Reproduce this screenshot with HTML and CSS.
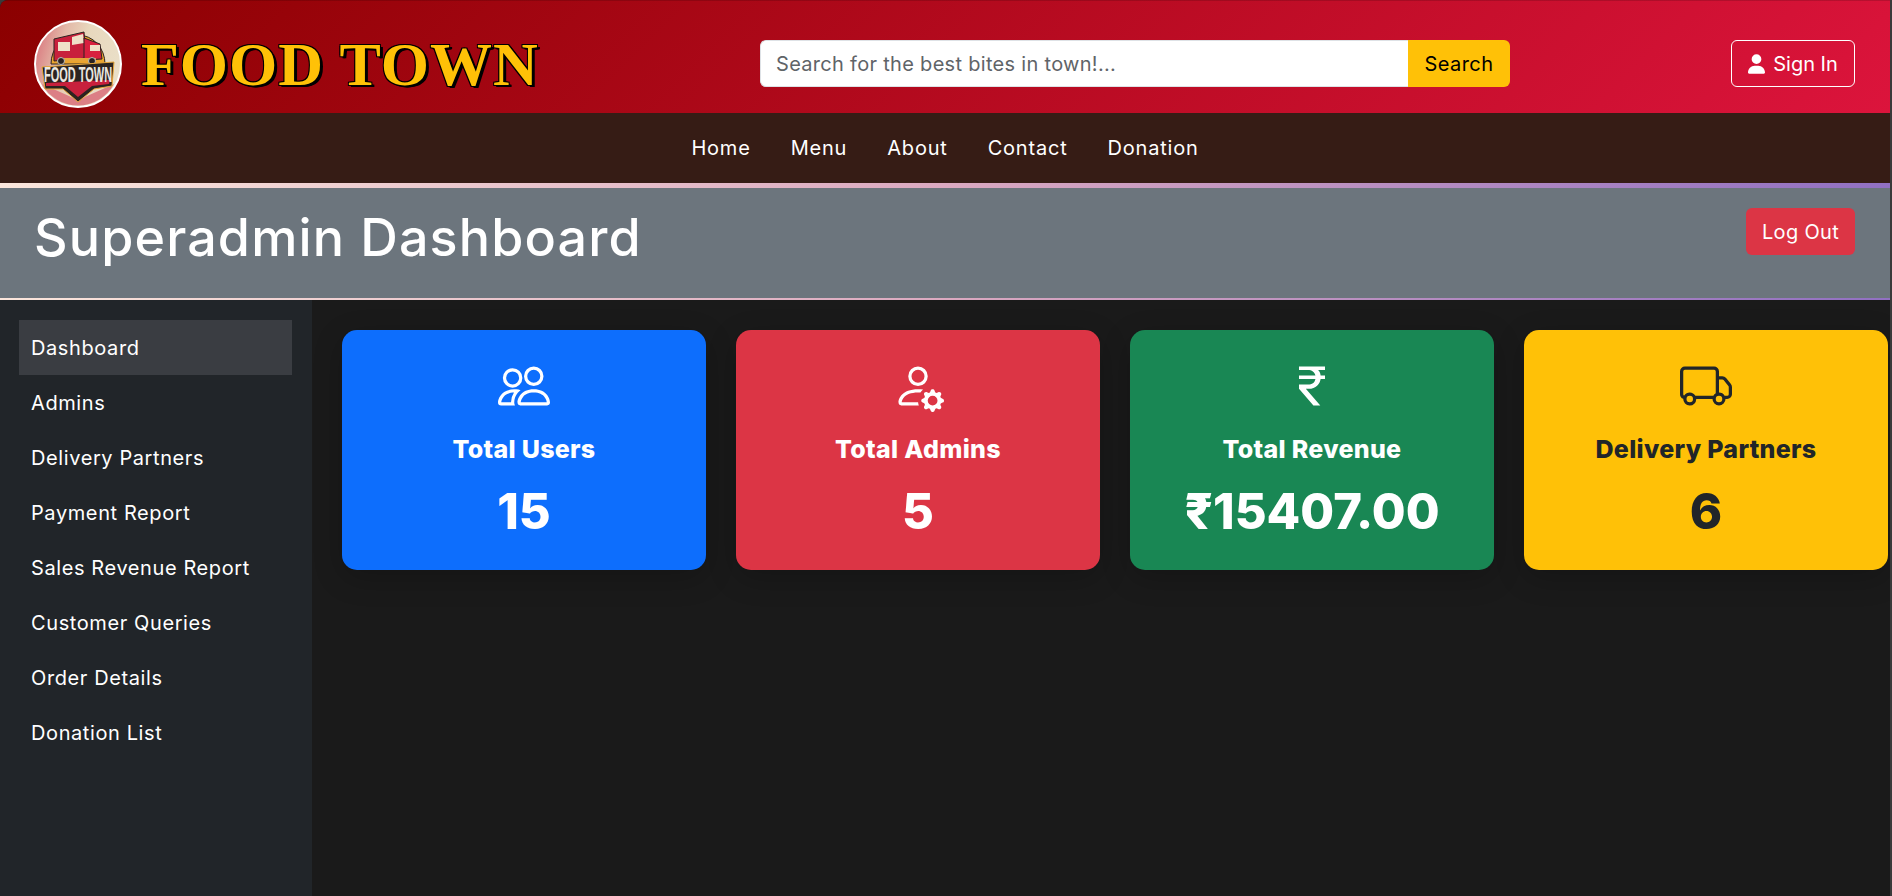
FILE: index.html
```html
<!DOCTYPE html>
<html lang="en">
<head>
<meta charset="utf-8">
<title>Food Town - Superadmin Dashboard</title>
<link rel="stylesheet" href="styles.css">
</head>
<body>
<div class="window">
  <header class="topbar">
    <div class="brand">
      <svg class="logo" viewBox="0 0 88 88" aria-hidden="true">
        <defs>
          <linearGradient id="logobg" x1="0" y1="0.2" x2="1" y2="0.5">
            <stop offset="0" stop-color="#d9737c"/><stop offset="0.3" stop-color="#e3b9a8"/><stop offset="0.55" stop-color="#e8d8bd"/><stop offset="1" stop-color="#eadfc8"/>
          </linearGradient>
        </defs>
        <circle cx="44" cy="44" r="43" fill="url(#logobg)" stroke="#fff" stroke-width="2"/>
        <path d="M8 64 A41 41 0 0 0 80 64 L44 80Z" fill="#dc7f85"/>
        <path d="M17 44 A27 29 0 0 1 71 44Z" fill="#eba530" stroke="#2b2320" stroke-width="1"/>
        <path d="M20 19 L50 12 L52 38 L20 41Z" fill="#c8203c" stroke="#2b2320" stroke-width="1"/>
        <path d="M24 22h12v9H24z" fill="#efe0c8"/>
        <path d="M38 17l11-3 1 9-12 2z" fill="#efe0c8"/>
        <path d="M50 18 L66 24 L68 39 L50 40Z" fill="#d8203f" stroke="#2b2320" stroke-width="1"/>
        <path d="M56 25h10v6H56z" fill="#efe0c8"/>
        <path d="M30 38h32v3H30z" fill="#e6a63a"/>
        <circle cx="27" cy="41" r="3.5" fill="#2b2320" stroke="#bbb"/>
        <circle cx="58" cy="41" r="3.5" fill="#2b2320" stroke="#bbb"/>
        <path d="M8 47 L80 42 L78 66 L60 69 L44 82 L29 69 L11 69Z" fill="#2b2320" stroke="#e7a83a" stroke-width="1"/>
        <path d="M12 63 L76 60 L75 64 L58 66 L44 77 L31 66 L12 66Z" fill="#c8203c"/>
        <text class="logo-text" transform="translate(44 62) scale(.5 1)">FOOD TOWN</text>
      </svg>
      <span class="brand-name">FOOD TOWN</span>
    </div>
    <form class="search">
      <input class="search-input" type="text" placeholder="Search for the best bites in town!...">
      <button class="search-btn" type="button">Search</button>
    </form>
    <a class="signin" href="#">
      <svg class="signin-icon" viewBox="0 0 448 512" aria-hidden="true"><path fill="#fff" d="M224 256A128 128 0 1 0 224 0a128 128 0 1 0 0 256zm-45.7 48C79.8 304 0 383.8 0 482.3C0 498.7 13.3 512 29.7 512H418.3c16.4 0 29.7-13.3 29.7-29.7C448 383.8 368.2 304 269.7 304H178.3z"/></svg>
      Sign In
    </a>
  </header>

  <nav class="mainnav">
    <a href="#">Home</a>
    <a href="#">Menu</a>
    <a href="#">About</a>
    <a href="#">Contact</a>
    <a href="#">Donation</a>
  </nav>

  <div class="rule rule-thick"></div>
  <section class="titlebar">
    <h1>Superadmin Dashboard</h1>
    <button class="logout" type="button">Log Out</button>
  </section>
  <div class="rule rule-thin"></div>

  <div class="layout">
    <aside class="sidebar">
      <a class="active" href="#">Dashboard</a>
      <a href="#">Admins</a>
      <a href="#">Delivery Partners</a>
      <a href="#">Payment Report</a>
      <a href="#">Sales Revenue Report</a>
      <a href="#">Customer Queries</a>
      <a href="#">Order Details</a>
      <a href="#">Donation List</a>
    </aside>
    <main class="cards">
      <article class="card card-blue">
        <svg class="card-icon" viewBox="0 0 16 16" aria-hidden="true"><path fill="currentColor" d="M15 14s1 0 1-1-1-4-5-4-5 3-5 4 1 1 1 1h8Zm-7.978-1A.261.261 0 0 1 7 12.996c.001-.264.167-1.03.76-1.72C8.312 10.629 9.282 10 11 10c1.717 0 2.687.63 3.24 1.276.593.69.758 1.457.76 1.72l-.008.002a.274.274 0 0 1-.014.002H7.022ZM11 7a2 2 0 1 0 0-4 2 2 0 0 0 0 4Zm3-2a3 3 0 1 1-6 0 3 3 0 0 1 6 0ZM6.936 9.28a5.88 5.88 0 0 0-1.23-.247A7.35 7.35 0 0 0 5 9c-4 0-5 3-5 4 0 .667.333 1 1 1h4.216A2.238 2.238 0 0 1 5 13c0-1.01.377-2.042 1.09-2.904.243-.294.526-.569.846-.816ZM4.92 10A5.493 5.493 0 0 0 4 13H1c0-.26.164-1.03.76-1.724.545-.636 1.492-1.256 3.16-1.275ZM1.5 5.5a3 3 0 1 1 6 0 3 3 0 0 1-6 0Zm3-2a2 2 0 1 0 0 4 2 2 0 0 0 0-4Z"/></svg>
        <h2>Total Users</h2>
        <p>15</p>
      </article>
      <article class="card card-red">
        <svg class="card-icon" viewBox="0 0 16 16" aria-hidden="true"><path fill="currentColor" d="M11 5a3 3 0 1 1-6 0 3 3 0 0 1 6 0ZM8 7a2 2 0 1 0 0-4 2 2 0 0 0 0 4Zm.256 7a4.474 4.474 0 0 1-.229-1.004H3c.001-.246.154-.986.832-1.664C4.484 10.68 5.711 10 8 10c.26 0 .507.009.74.025.226-.341.496-.65.804-.918C9.077 9.038 8.564 9 8 9c-5 0-6 3-6 4s1 1 1 1h5.256Zm3.63-4.54c.18-.613 1.048-.613 1.229 0l.043.148a.64.64 0 0 0 .921.382l.136-.074c.561-.306 1.175.308.87.869l-.075.136a.64.64 0 0 0 .382.92l.149.045c.612.18.612 1.048 0 1.229l-.15.043a.64.64 0 0 0-.38.921l.074.136c.305.561-.309 1.175-.87.87l-.136-.075a.64.64 0 0 0-.92.382l-.045.149c-.18.612-1.048.612-1.229 0l-.043-.15a.64.64 0 0 0-.921-.38l-.136.074c-.561.305-1.175-.309-.87-.87l.075-.136a.64.64 0 0 0-.382-.92l-.148-.045c-.613-.18-.613-1.048 0-1.229l.148-.043a.64.64 0 0 0 .382-.921l-.074-.136c-.306-.561.308-1.175.869-.87l.136.075a.64.64 0 0 0 .92-.382l.045-.148ZM14 12.5a1.5 1.5 0 1 0-3 0 1.5 1.5 0 0 0 3 0Z"/></svg>
        <h2>Total Admins</h2>
        <p>5</p>
      </article>
      <article class="card card-green">
        <svg class="card-icon" viewBox="0 0 16 16" aria-hidden="true"><path fill="currentColor" d="M4 3.06h2.726c1.22 0 2.12.575 2.325 1.724H4v1.051h5.051C8.855 7.001 8 7.558 6.788 7.558H4v1.317L8.437 14h2.11L6.095 8.884h.855c2.316-.018 3.465-1.476 3.688-3.049H12V4.784h-1.345c-.08-.778-.357-1.335-.793-1.732H12V2H4v1.06Z"/></svg>
        <h2>Total Revenue</h2>
        <p>₹15407.00</p>
      </article>
      <article class="card card-yellow">
        <svg class="card-icon" viewBox="0 0 16 16" aria-hidden="true"><path fill="currentColor" d="M0 3.5A1.5 1.5 0 0 1 1.5 2h9A1.5 1.5 0 0 1 12 3.5V5h1.02a1.5 1.5 0 0 1 1.17.563l1.481 1.85a1.5 1.5 0 0 1 .329.938V10.5a1.5 1.5 0 0 1-1.5 1.5H14a2 2 0 1 1-4 0H5a2 2 0 1 1-3.998-.085A1.5 1.5 0 0 1 0 10.5v-7Zm1.294 7.456A1.999 1.999 0 0 1 4.732 11h5.536a2.01 2.01 0 0 1 .732-.732V3.5a.5.5 0 0 0-.5-.5h-9a.5.5 0 0 0-.5.5v7a.5.5 0 0 0 .294.456ZM12 10a2 2 0 0 1 1.732 1h.768a.5.5 0 0 0 .5-.5V8.35a.5.5 0 0 0-.11-.312l-1.48-1.85A.5.5 0 0 0 13.02 6H12v4Zm-9 1a1 1 0 1 0 0 2 1 1 0 0 0 0-2Zm9 0a1 1 0 1 0 0 2 1 1 0 0 0 0-2Z"/></svg>
        <h2>Delivery Partners</h2>
        <p>6</p>
      </article>
    </main>
  </div>
</div>
</body>
</html>
```
FILE: styles.css
```css
* { box-sizing: border-box; }
html, body { margin: 0; height: 100%; background: #3a3a3a; overflow: hidden; }
body { font-family: Inter, "Noto Sans", "DejaVu Sans", sans-serif; font-size: 20px; color: #fff; }
a { color: inherit; text-decoration: none; }

.window { height: 896px; width: 1890px; display: flex; flex-direction: column; background: #1a1a1a; border-top-left-radius: 8px; overflow: hidden; }

.topbar { height: 113px; flex: none; display: flex; align-items: center; padding: 14px 35px 0 34px; background: linear-gradient(135deg, #8b0000, #dc143c); box-shadow: inset 0 1px rgba(0, 0, 0, .15); }
.brand { width: 726px; flex: none; display: flex; align-items: center; gap: 19px; }
.logo { width: 88px; height: 88px; flex: none; }
.logo-text { font: 700 22px "Liberation Sans", sans-serif; fill: #ece8e0; text-anchor: middle; }
.brand-name { font-family: "Liberation Serif", serif; font-weight: 700; font-size: 62px; letter-spacing: 1px; line-height: 1; color: #ffc107; text-shadow: 2px 2px 0 #000, 3px 2px 0 #000, -1px -1px 0 #000, 1px -1px 0 #000, -1px 1px 0 #000, 1px 1px 0 #000; white-space: nowrap; }

.search { display: flex; width: 750px; height: 47px; flex: none; }
.search-input { flex: 1; min-width: 0; height: 100%; padding: 0 15px; border: 1px solid #dee2e6; border-right: 0; border-radius: 6px 0 0 6px; background: #fff; font: 400 20px Inter, sans-serif; letter-spacing: .3px; color: #212529; outline: 0; }
.search-input::placeholder { color: #5f6468; opacity: 1; }
.search-btn { width: 102px; flex: none; height: 100%; padding: 0; border: 0; border-radius: 0 6px 6px 0; background: #ffc107; color: #000; font: 400 20px Inter, sans-serif; letter-spacing: .4px; }

.signin { margin-left: auto; width: 124px; height: 47px; display: flex; align-items: center; justify-content: center; gap: 8px; border: 1px solid #fff; border-radius: 6px; font-size: 20px; }
.signin-icon { width: 17px; height: 20px; flex: none; }

.mainnav { height: 70px; flex: none; display: flex; align-items: center; justify-content: center; gap: 40px; background: #361c15; font-size: 20px; letter-spacing: .8px; }

.rule { flex: none; background: linear-gradient(90deg, #fbe6dc, #dba9c0 50%, #9170c2); }
.rule-thick { height: 5px; }
.rule-thin { height: 2px; }

.titlebar { height: 110px; flex: none; display: flex; justify-content: space-between; padding: 20px 35px 0 34px; background: #6c757d; }
.titlebar h1 { margin: 0; font-size: 52px; font-weight: 500; letter-spacing: 1.15px; line-height: 60px; }
.logout { width: 109px; height: 47px; padding: 0; border: 0; border-radius: 6px; background: #dc3545; color: #fff; font: 400 20px Inter, sans-serif; letter-spacing: .3px; }

.layout { flex: 1; min-height: 0; display: flex; }
.sidebar { width: 312px; flex: none; display: flex; flex-direction: column; padding: 20px 20px 20px 19px; background: #212529; font-size: 20px; letter-spacing: .6px; }
.sidebar a { height: 55px; flex: none; display: flex; align-items: center; padding: 0 0 0 12px; }
.sidebar a.active { background: #3a3d42; }

.cards { flex: 1; min-width: 0; display: grid; grid-template-columns: repeat(4, 1fr); gap: 30px; align-content: start; padding: 30px 2px 0 30px; }
.card { height: 240px; border-radius: 15px; display: flex; flex-direction: column; align-items: center; padding-top: 30px; box-shadow: 0 8px 30px rgba(0, 0, 0, .2); }
.card-icon { width: 52px; height: 52px; display: block; }
.card h2 { margin: 21px 0 0; font-size: 25px; font-weight: 800; letter-spacing: .3px; line-height: 32px; }
.card p { margin: 18px 0 0; font-size: 49px; font-weight: 800; line-height: 58px; }
.card-blue { background: #0d6efd; }
.card-red { background: #dc3545; }
.card-green { background: #198754; }
.card-yellow { background: #ffc107; color: #212529; }
```
